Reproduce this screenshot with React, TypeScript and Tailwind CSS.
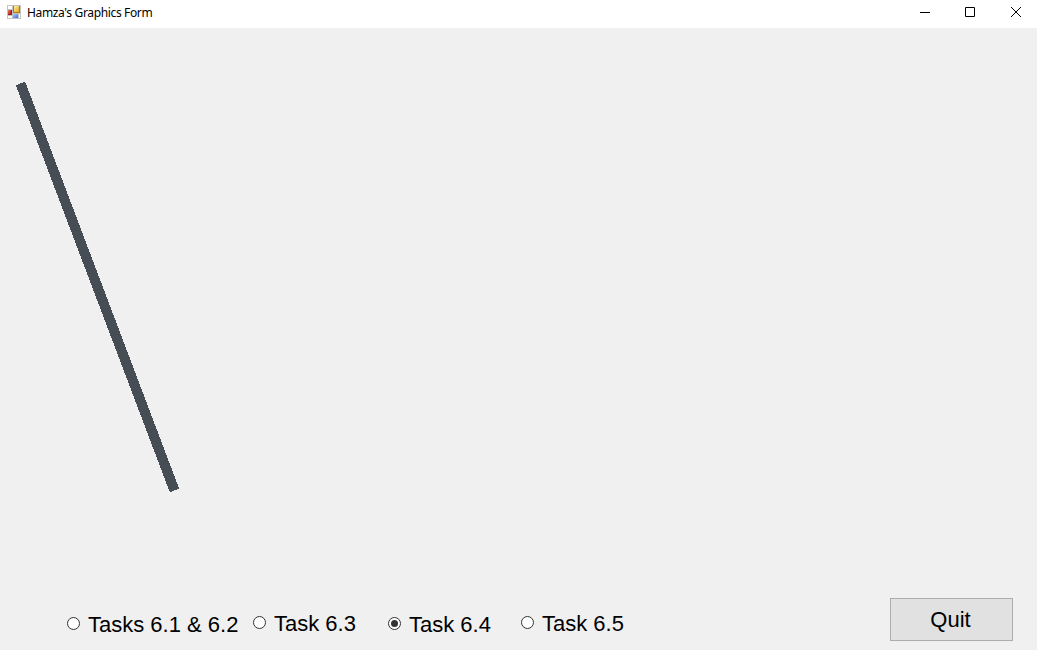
const tasks = [
  { label: 'Tasks 6.1 & 6.2', cls: 'ml-[67px] w-[186px] pt-[1px]', on: false },
  { label: 'Task 6.3', cls: 'w-[135px]', on: false },
  { label: 'Task 6.4', cls: 'w-[133px] pt-[1px]', on: true },
  { label: 'Task 6.5', cls: 'w-[135px]', on: false },
];

function AppIcon() {
  return (
    <svg width="14" height="14" viewBox="0 0 14 14" shapeRendering="crispEdges">
      <defs>
        <linearGradient id="yellow" x1="0" y1="0" x2="1" y2="1">
          <stop stopColor="#fff0a8" />
          <stop offset="1" stopColor="#e3a51a" />
        </linearGradient>
        <linearGradient id="red" x1="0" y1="0" x2="1" y2="1">
          <stop stopColor="#e88070" />
          <stop offset="1" stopColor="#b01410" />
        </linearGradient>
        <linearGradient id="blue" x1="0" y1="0" x2="1" y2="1">
          <stop stopColor="#a9ccff" />
          <stop offset="1" stopColor="#3870d4" />
        </linearGradient>
      </defs>
      <rect width="14" height="14" fill="#c3c3c3" />
      <path d="M1 1h4v3h-4zM1 11h4v2h-4zM12 9h1v4h-1z" fill="#fff" />
      <rect x="1" y="5" width="4" height="5" fill="#991a16" />
      <rect x="1" y="5" width="3" height="4" fill="url(#red)" />
      <rect x="6" y="1" width="7" height="7" fill="#b47b13" />
      <rect x="7" y="1" width="5" height="6" fill="url(#yellow)" />
      <rect x="6" y="9" width="5" height="4" fill="url(#blue)" />
    </svg>
  );
}

export default function App() {
  return (
    <div className="flex h-[650px] w-[1037px] flex-col overflow-hidden bg-[#f0f0f0] text-black">
      <header className="flex h-7 shrink-0 items-start bg-white">
        <div className="pl-[7px] pt-[5px]"><AppIcon /></div>
        <div className="ml-[6px] pt-[5px] font-['Noto_Sans',sans-serif] text-[12px] leading-4 tracking-[-0.35px] whitespace-nowrap">Hamza's Graphics Form</div>
        <svg className="ml-auto" width="137" height="28" viewBox="0 0 137 28" fill="none" stroke="#000">
          <path d="M20 12.500h10M65.500 7.500h9v9h-9zM111 7l10 10M121 7l-10 10" />
        </svg>
      </header>
      <main className="h-[570px] shrink-0">
        <svg width="1037" height="570" viewBox="0 28 1037 570" shapeRendering="crispEdges">
          <path d="M20.500 83.500L174.500 490.500" stroke="#464d54" strokeWidth="10" />
        </svg>
      </main>
      <footer className="flex h-[52px] items-start font-['Liberation_Sans',Arial,sans-serif] text-[22px] leading-[26px]">
        <div className="flex pt-[13px]">
          {tasks.map((t) => (
            <label key={t.label} className={`flex shrink-0 items-start ${t.cls}`}>
              <svg className="mt-[5px] shrink-0" width="13" height="13" viewBox="0 0 13 13">
                <circle cx="6.500" cy="6.500" r="6" fill="#fff" stroke="#333" />
                {t.on && <circle cx="6.500" cy="6.500" r="3.500" fill="#333" />}
              </svg>
              <span className="ml-[8px] whitespace-nowrap">{t.label}</span>
            </label>
          ))}
        </div>
        <button className="mr-6 ml-auto h-[43px] w-[123px] border border-[#adadad] bg-[#e1e1e1] pr-[2px]">Quit</button>
      </footer>
    </div>
  );
}
